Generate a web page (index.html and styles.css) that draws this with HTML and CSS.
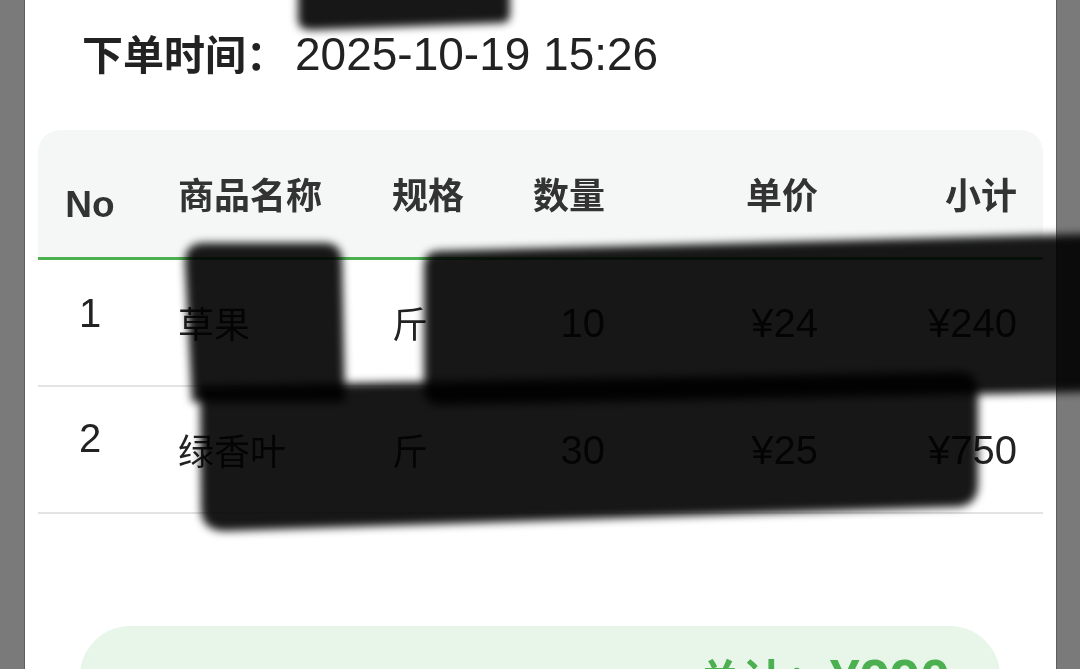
FILE: index.html
```html
<!DOCTYPE html>
<html lang="zh-CN">
<head>
<meta charset="utf-8">
<title>订单详情</title>
<link rel="stylesheet" href="styles.css">
</head>
<body>
  <main class="panel">
    <div class="time-row">
      <span class="time-label">下单时间：</span><span class="time-value">2025-10-19 15:26</span>
    </div>

    <section class="table">
      <div class="row thead">
        <div class="c c-no"><span class="no-head">No</span></div>
        <div class="c c-name">商品名称</div>
        <div class="c c-spec">规格</div>
        <div class="c c-num">数量</div>
        <div class="c c-num">单价</div>
        <div class="c c-num">小计</div>
      </div>
      <div class="row tbody">
        <div class="c c-no"><span class="idx idx-1">1</span></div>
        <div class="c c-name">草果</div>
        <div class="c c-spec">斤</div>
        <div class="c c-num num">10</div>
        <div class="c c-num num">¥24</div>
        <div class="c c-num num">¥240</div>
      </div>
      <div class="row tbody">
        <div class="c c-no"><span class="idx idx-2">2</span></div>
        <div class="c c-name">绿香叶</div>
        <div class="c c-spec">斤</div>
        <div class="c c-num num">30</div>
        <div class="c c-num num">¥25</div>
        <div class="c c-num num">¥750</div>
      </div>
    </section>

    <div class="summary">
      <span class="sum-label">总计：</span><span class="sum-value">¥990</span>
    </div>
  </main>

  <svg class="redact" viewBox="0 0 1080 669" width="1080" height="669" aria-hidden="true">
    <defs>
      <filter id="soft" x="-10%" y="-20%" width="120%" height="140%">
        <feGaussianBlur stdDeviation="4.5"/>
      </filter>
    </defs>
    <g filter="url(#soft)" fill="#000" fill-opacity="0.91">
      <path d="M298,-10 H510 V15 Q510,23 500,23 L312,30 Q298,30 298,20 Z"/>
      <path d="M185,262 Q185,243 204,243 H324 Q341,243 342,260 L345,402 H192 Z"/>
      <path d="M424,266 Q424,251 440,251 L1090,234 L1090,392 L440,405 Q424,405 424,390 Z"/>
      <path d="M200,386 L958,372 Q978,372 978,392 L978,484 Q978,507 954,507 L226,531 Q202,531 201,510 Z"/>
    </g>
  </svg>
</body>
</html>
```

FILE: styles.css
```css
* {
  box-sizing: border-box;
}

html, body {
  margin: 0;
  padding: 0;
}

body {
  width: 1080px;
  height: 669px;
  overflow: hidden;
  background: #7a7a7a;
  position: relative;
  font-family: "Liberation Sans", "Noto Sans CJK SC", sans-serif;
  color: #222;
}

.panel {
  margin-left: 24px;
  width: 1033px;
  height: 669px;
  overflow: hidden;
  background: #fff;
  border-left: 1px solid #5e5e5e;
  border-right: 1px solid #5e5e5e;
  padding: 22px 13px 0 13px;
}

.time-row {
  height: 60px;
  line-height: 60px;
  padding-left: 44px;
  white-space: nowrap;
}

.time-label {
  font-family: "Noto Sans CJK SC", sans-serif;
  font-size: 41px;
  font-weight: 700;
  color: #222;
}

.time-value {
  font-size: 46px;
  margin-left: 8px;
  color: #222;
}

.table {
  margin-top: 48px;
  border-radius: 22px 22px 0 0;
  overflow: hidden;
}

.row {
  display: grid;
  grid-template-columns: 104px 250px 88px 125px 213px 199px;
  padding-right: 26px;
  align-items: center;
}

.thead {
  height: 130px;
  background: #f5f7f6;
  border-bottom: 3px solid #4caf50;
  font-family: "Noto Sans CJK SC", sans-serif;
  font-size: 36px;
  font-weight: 700;
  color: #333;
}

.tbody {
  height: 127px;
  border-bottom: 2px solid #e3e3e3;
  font-family: "Noto Sans CJK SC", sans-serif;
  font-size: 36px;
  color: #222;
}

.c {
  white-space: nowrap;
  line-height: 1.2;
}

.c-no {
  text-align: center;
}

.c-name {
  padding-left: 36px;
}

.c-num {
  text-align: right;
}

.no-head {
  display: inline-block;
  font-family: "Liberation Sans", sans-serif;
  font-size: 37px;
  font-weight: 700;
  margin-top: 24px;
}

.idx {
  display: inline-block;
  font-family: "Liberation Sans", sans-serif;
  font-size: 40px;
}

.idx-1 {
  margin-bottom: 20px;
}

.idx-2 {
  margin-bottom: 24px;
}

.num {
  font-family: "Liberation Sans", sans-serif;
  font-size: 40px;
}

.summary {
  margin: 112px 43px 0 42px;
  height: 120px;
  background: #e8f5e9;
  border-radius: 50px;
  padding: 22px 50px 0 0;
  text-align: right;
  color: #4caf50;
  font-weight: 700;
  line-height: 60px;
  white-space: nowrap;
}

.sum-label {
  font-family: "Noto Sans CJK SC", sans-serif;
  font-size: 44px;
}

.sum-value {
  font-size: 54px;
}

.redact {
  position: absolute;
  left: 0;
  top: 0;
  pointer-events: none;
  mix-blend-mode: multiply;
}
```
